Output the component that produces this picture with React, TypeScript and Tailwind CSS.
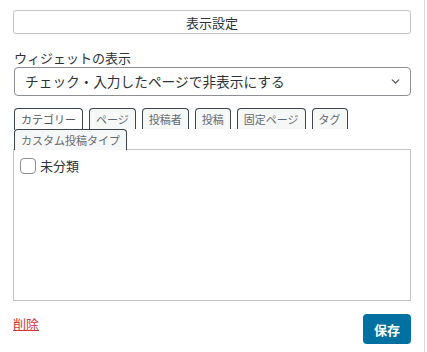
import { ChevronDown } from "lucide-react";

const TABS = ["カテゴリー", "ページ", "投稿者", "投稿", "固定ページ", "タグ", "カスタム投稿タイプ"];

export default function App() {
  return (
    <div
      className="w-[427px] h-[352px] bg-white flex"
      style={{ fontFamily: '"Noto Sans CJK JP", "Noto Sans", sans-serif' }}
    >
      <div className="w-[425px] border-r border-[#dcdcde] pl-[13px] pr-[15px] pt-[10px]">
        <button
          type="button"
          className="w-[398px] h-[24px] border border-[#c3c4c7] rounded-[3px] bg-white text-[13px] text-[#2c3338] flex items-center justify-center leading-none"
        >
          表示設定
        </button>

        <label className="block mt-[16px] text-[13px] leading-[16px] text-[#2c3338] pl-px">
          ウィジェットの表示
        </label>
        <div className="mt-px ml-px w-[397px] h-[29px] border border-[#8c8f94] rounded-[4px] flex items-center pl-[10px] pr-[8px]">
          <span className="flex-1 text-[13.7px] text-[#2c3338] leading-none">
            チェック・入力したページで非表示にする
          </span>
          <ChevronDown className="w-[13px] h-[13px] text-[#50575e]" strokeWidth={2.5} />
        </div>

        {/* Tabs */}
        <div className="mt-[12px] ml-px flex flex-wrap gap-x-[6px] w-[397px] relative z-10">
          {TABS.map((tab, i) => (
            <div
              key={tab}
              className={`h-[21px] px-[6px] border border-b-0 border-[#3c434a] rounded-t-[4px] text-[11px] leading-[20px] ${
                i === 0 ? "bg-white text-[#50575e] h-[22px]" : "bg-[#f6f7f7] text-[#646970]"
              } ${i === 6 ? "-mt-px" : ""}`}
            >
              {tab}
            </div>
          ))}
        </div>
        <div className="w-[398px] h-[152px] border border-[#c3c4c7] -mt-px px-[6px] pt-[6px]">
          <label className="flex items-center gap-[4px] text-[13px] text-[#2c3338]">
            <span className="w-[16px] h-[16px] border border-[#8c8f94] rounded-[4px] bg-white" />
            未分類
          </label>
        </div>

        <div className="mt-[13px] flex items-start justify-between w-[398px]">
          <a className="mt-[2px] text-[13px] text-[#d63638] underline leading-[16px]" href="#">
            削除
          </a>
          <button
            type="button"
            className="w-[48px] h-[30px] rounded-[4px] bg-[#0071a1] text-white text-[13px] font-bold leading-none"
          >
            保存
          </button>
        </div>
      </div>
    </div>
  );
}
